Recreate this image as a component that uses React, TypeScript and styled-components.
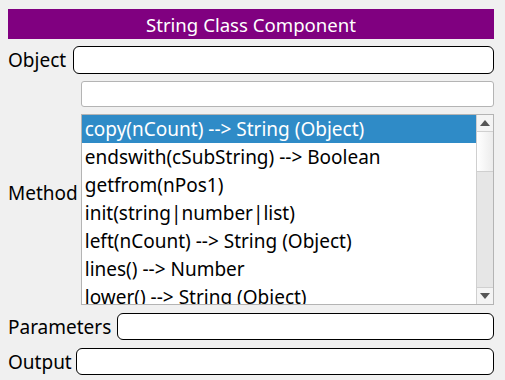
import React from "react";
import styled, { createGlobalStyle } from "styled-components";

const Global = createGlobalStyle`
  html, body { margin: 0; padding: 0; background: #f0f0f0; }
  body { font-family: "Noto Sans", "Open Sans", sans-serif; }
  * { box-sizing: border-box; }
`;

const Page = styled.div`
  width: 505px;
  height: 380px;
  padding: 9px 11px 0 8px;
  display: flex;
  flex-direction: column;
  gap: 7px;
`;

const TitleBar = styled.div`
  height: 30px;
  background: #800080;
  color: #fff;
  font-size: 18.6px;
  display: flex;
  align-items: center;
  justify-content: center;
`;

const Row = styled.div<{ $gap?: number; $top?: number }>`
  display: flex;
  align-items: center;
  gap: ${(p) => p.$gap ?? 7}px;
  margin-top: ${(p) => p.$top ?? 0}px;
`;

const Label = styled.span`
  font-size: 19px;
  line-height: 24px;
  color: #000;
  white-space: nowrap;
`;

const Input = styled.div<{ $soft?: boolean; $h?: number }>`
  flex: 1 0 auto;
  height: ${(p) => p.$h ?? 28}px;
  background: #fff;
  border: 1px solid ${(p) => (p.$soft ? "#b4b4b4" : "#000")};
  border-radius: ${(p) => (p.$soft ? 3 : 6)}px;
`;

const Column = styled.div`
  flex: 1;
  display: flex;
  flex-direction: column;
  gap: 7px;
`;

const List = styled.div`
  height: 191px;
  background: #fff;
  border: 1px solid #b4b4b4;
  display: flex;
  overflow: hidden;
`;

const Items = styled.div`
  flex: 1;
  overflow: hidden;
`;

const Item = styled.div<{ $selected?: boolean }>`
  height: 28px;
  padding-left: 3px;
  font-size: 19px;
  line-height: 28px;
  white-space: nowrap;
  background: ${(p) => (p.$selected ? "#2f8bc7" : "transparent")};
  color: ${(p) => (p.$selected ? "#fff" : "#000")};
`;

const ScrollBar = styled.div`
  width: 17px;
  display: flex;
  flex-direction: column;
  background: #e6e6e6;
  border-left: 1px solid #cfcfcf;
`;

const ArrowBtn = styled.div`
  height: 17px;
  background: #f4f4f4;
  display: flex;
  align-items: center;
  justify-content: center;
  border-bottom: 1px solid #d0d0d0;
  &:last-child {
    border-bottom: none;
    border-top: 1px solid #d0d0d0;
  }
`;

const Thumb = styled.div`
  height: 40px;
  background: linear-gradient(to right, #ffffff, #ececec);
  border-bottom: 1px solid #cfcfcf;
`;

const Track = styled.div`
  flex: 1;
`;

const methods = [
  "copy(nCount) --> String (Object)",
  "endswith(cSubString) --> Boolean",
  "getfrom(nPos1)",
  "init(string|number|list)",
  "left(nCount) --> String (Object)",
  "lines() --> Number",
  "lower() --> String (Object)",
];

const Arrow = ({ up }: { up?: boolean }) => (
  <svg width="10" height="6" viewBox="0 0 10 6">
    <path d={up ? "M0 6 L5 0 L10 6 Z" : "M0 0 L10 0 L5 6 Z"} fill="#555" />
  </svg>
);

export default function App() {
  return (
    <>
      <Global />
      <Page>
        <TitleBar>String Class Component</TitleBar>
        <Row>
          <Label>Object</Label>
          <Input />
        </Row>
        <Row $gap={3}>
          <Label>Method</Label>
          <Column>
            <Input $soft $h={26} />
            <List>
              <Items>
                {methods.map((m, i) => (
                  <Item key={m} $selected={i === 0}>
                    {m}
                  </Item>
                ))}
              </Items>
              <ScrollBar>
                <ArrowBtn>
                  <Arrow up />
                </ArrowBtn>
                <Thumb />
                <Track />
                <ArrowBtn>
                  <Arrow />
                </ArrowBtn>
              </ScrollBar>
            </List>
          </Column>
        </Row>
        <Row $top={1} $gap={6}>
          <Label>Parameters</Label>
          <Input $h={27} />
        </Row>
        <Row $top={1} $gap={4}>
          <Label>Output</Label>
          <Input $h={27} />
        </Row>
      </Page>
    </>
  );
}
